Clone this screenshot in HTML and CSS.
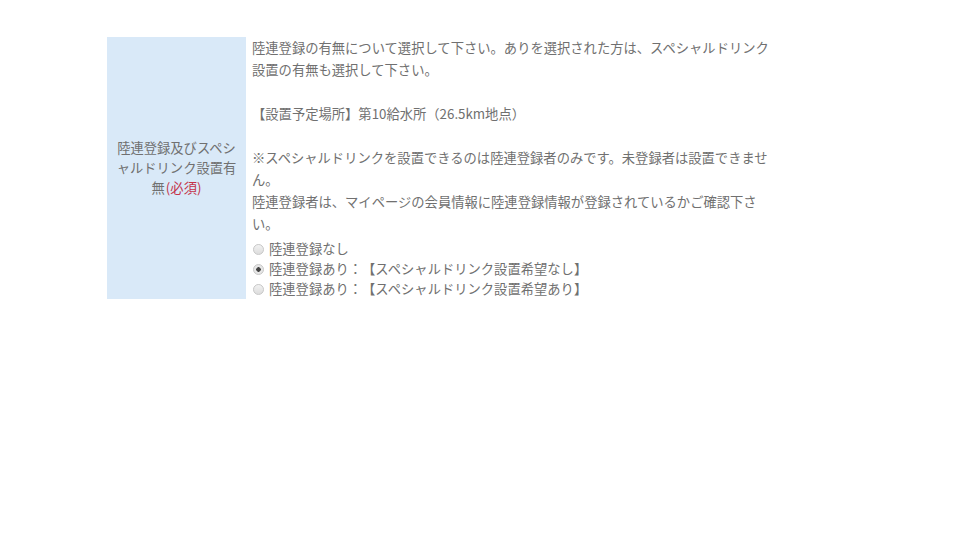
FILE: index.html
```html
<!DOCTYPE html>
<html lang="ja">
<head>
  <meta charset="UTF-8">
  <meta name="viewport" content="width=device-width, initial-scale=1.0">
  <title>陸連登録</title>
  <link rel="stylesheet" href="styles.css">
</head>
<body>
  <table class="entry-table">
    <tr>
      <th>陸連登録及びスペシャルドリンク設置有無<span class="required">(必須)</span></th>
      <td>
        <div class="note">
          陸連登録の有無について選択して下さい。ありを選択された方は、スペシャルドリンク設置の有無も選択して下さい。<br>
          <br>
          【設置予定場所】第10給水所（26.5km地点）<br>
          <br>
          ※スペシャルドリンクを設置できるのは陸連登録者のみです。未登録者は設置できません。<br>
          陸連登録者は、マイページの会員情報に陸連登録情報が登録されているかご確認下さい。
        </div>
        <ul class="choices">
          <li><label><input type="radio" name="jaaf">陸連登録なし</label></li>
          <li><label><input type="radio" name="jaaf" checked>陸連登録あり：【スペシャルドリンク設置希望なし】</label></li>
          <li><label><input type="radio" name="jaaf">陸連登録あり：【スペシャルドリンク設置希望あり】</label></li>
        </ul>
      </td>
    </tr>
  </table>
</body>
</html>
```

FILE: styles.css
```css
body {
  margin: 0;
  padding: 37px 0 0 107px;
  font-family: "Noto Sans CJK JP", "DejaVu Sans", sans-serif;
  font-size: 13.3px;
  color: #707070;
  background-color: #fff;
  text-spacing-trim: space-all;
}
.entry-table {
  border-collapse: collapse;
}
.entry-table th {
  width: 121px;
  padding: 0 9px;
  background-color: #d9e9f8;
  font-weight: normal;
  line-height: 20px;
  text-align: center;
  vertical-align: middle;
}
.required {
  padding-left: 1px;
  color: #c4334a;
}
.entry-table td {
  width: 525px;
  padding: 0 5px 0 6px;
  vertical-align: top;
}
.note {
  line-height: 22px;
}
.choices {
  list-style: none;
  margin: 4px 0 0;
  padding: 0;
  line-height: 20px;
}
.choices input {
  appearance: none;
  -webkit-appearance: none;
  box-sizing: border-box;
  width: 11px;
  height: 11px;
  margin: 0 5px 0 1px;
  border: 1px solid #c8c8c8;
  border-radius: 50%;
  background: linear-gradient(#f2f2f2, #dcdcdc);
  vertical-align: -1px;
}
.choices input:checked {
  background: radial-gradient(circle, #444 0 2px, #e6e6e6 2.5px);
}
```
